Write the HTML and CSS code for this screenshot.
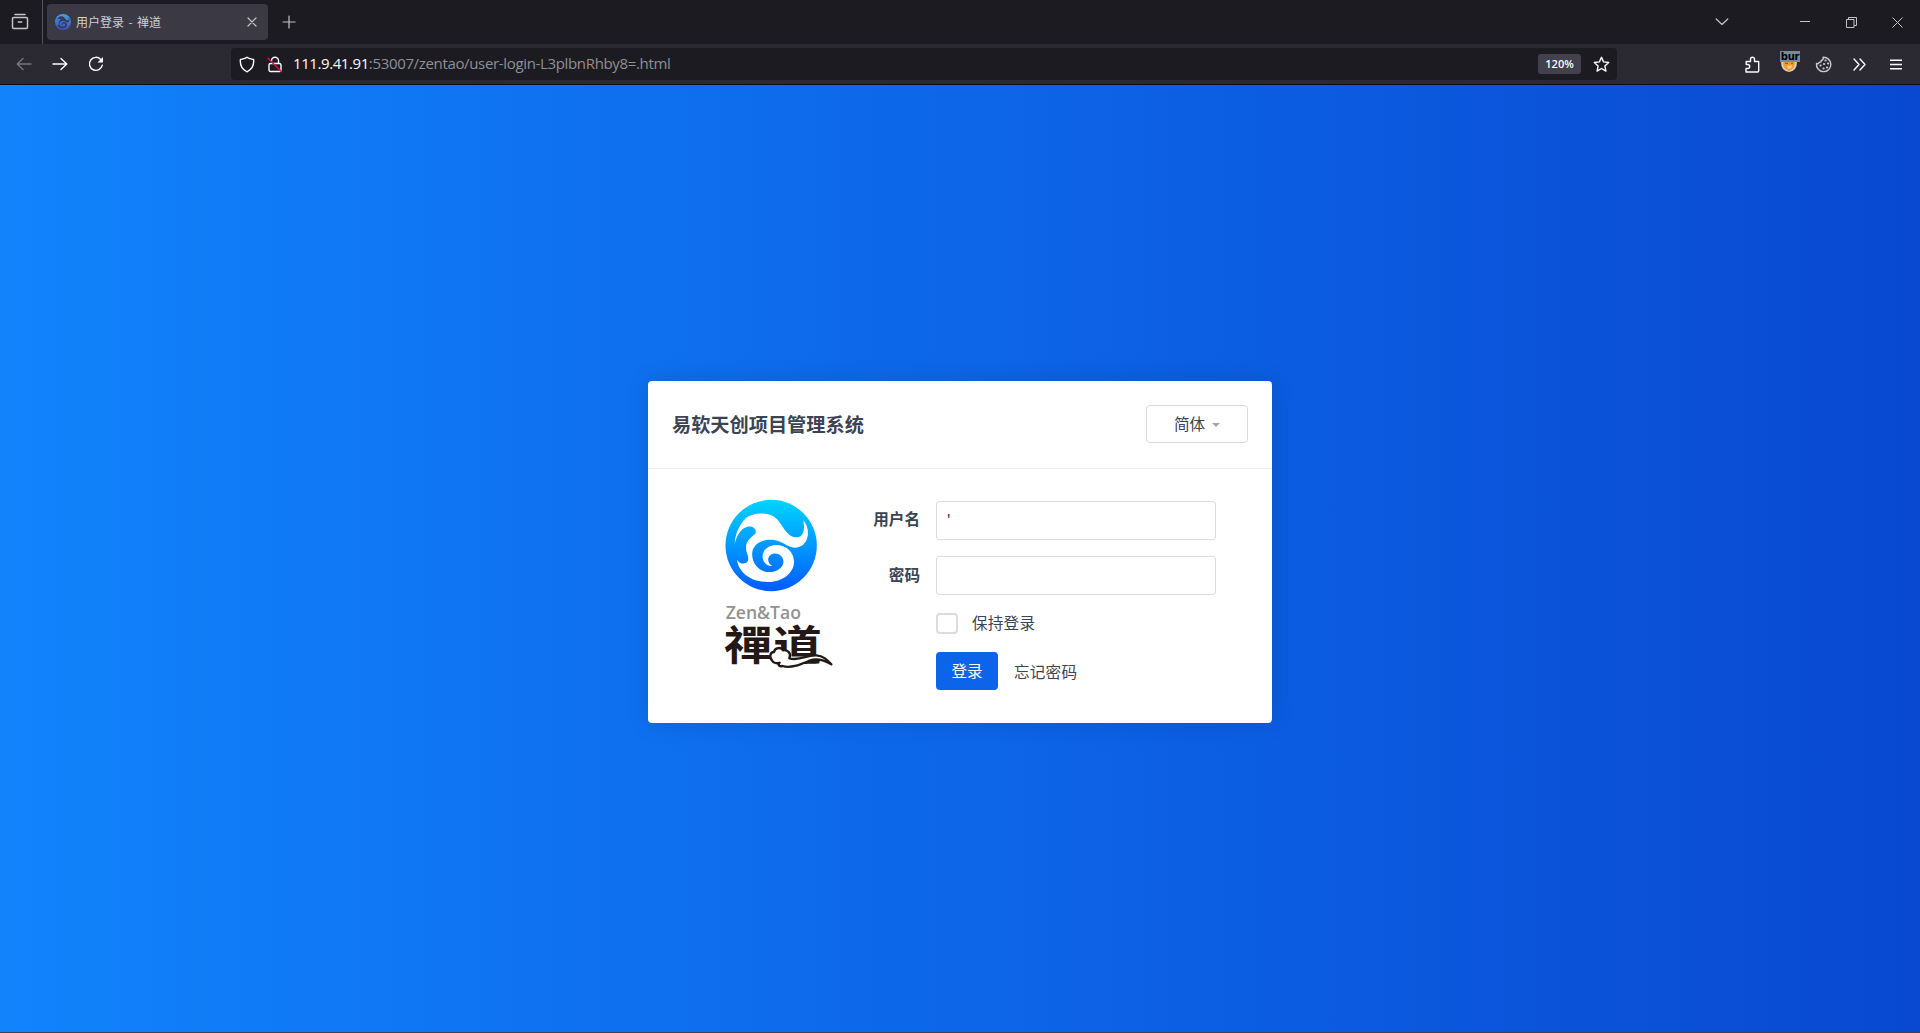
FILE: index.html
```html
<!DOCTYPE html>
<html lang="zh-CN">
<head>
<meta charset="utf-8">
<title>用户登录 - 禅道</title>
<link rel="stylesheet" href="styles.css">
</head>
<body>
<svg class="defs" aria-hidden="true">
  <defs>
    <linearGradient id="sea" x1="0" y1="0" x2="0" y2="1"><stop offset="0" stop-color="#00d5ff"/><stop offset="1" stop-color="#005bff"/></linearGradient>
    <linearGradient id="tabsea" x1="0" y1="0" x2="0" y2="1"><stop offset="0" stop-color="#4a9fdc"/><stop offset="1" stop-color="#3c4fc4"/></linearGradient>
    <path id="wave" d="M104 193C105 165 116 135 138 114C155 100 185 97 210 104C236 112 243 137 259 155C271 170 290 178 303 167C314 157 313 138 310 121C321 134 326 151 323 169C319 192 302 204 283 203C263 202 249 184 222 180C190 176 161 190 157 216C153 244 171 269 196 275C220 280 246 269 250 249C253 229 235 218 219 221C206 224 201 238 207 248C210 253 214 256 217 257C204 261 190 249 188 234C186 211 203 196 228 195C259 195 282 216 282 245C282 280 246 305 206 306C157 307 116 280 111 239C119 252 135 255 143 244C149 234 140 222 138 207C136 183 154 173 167 160C171 145 155 136 140 141C120 148 109 170 104 193Z"/>
  </defs>
</svg>
<header class="tabbar">
  <div class="view"><svg width="18" height="18" viewBox="0 0 18 18"><path d="M4 1.500h10M2.700 4.500h12.600a1.200 1.200 0 0 1 1.200 1.200v8.600a1.200 1.200 0 0 1-1.200 1.200H2.700a1.200 1.200 0 0 1-1.200-1.200V5.700a1.200 1.200 0 0 1 1.200-1.200zM7.300 9h3.400"/></svg></div>
  <div class="tab">
    <svg class="favicon" width="16" height="16" viewBox="77 60 273 273"><circle cx="213.500" cy="196.500" r="136.500" fill="url(#tabsea)"/><use href="#wave" fill="#343b62"/></svg>
    <span class="tab-title">用户登录 - 禅道</span>
    <svg width="10" height="10" viewBox="0 0 10 10"><path d="M1 1l8 8M9 1l-8 8"/></svg>
  </div>
  <svg class="plus" width="14" height="14" viewBox="0 0 14 14"><path d="M7 1v12M1 7h12"/></svg>
  <div class="window">
    <svg width="14" height="8" viewBox="0 0 14 8"><path d="M1.200 1L7 6.500L12.800 1"/></svg>
    <svg width="10" height="10" viewBox="0 0 10 10"><path d="M0 4.500h10"/></svg>
    <svg width="11" height="11" viewBox="0 0 11 11"><path d="M.5 2.500h7.500v8H.5zM2.500 2.500v-2h8v8H8"/></svg>
    <svg width="11" height="11" viewBox="0 0 11 11"><path d="M.5.5l10 10M10.500.5l-10 10"/></svg>
  </div>
</header>
<nav class="toolbar">
  <div class="history">
    <svg class="dim" width="16" height="14" viewBox="0 0 16 14"><path d="M15 7H1.500M7 1.500L1.200 7L7 12.500"/></svg>
    <svg width="16" height="14" viewBox="0 0 16 14"><path d="M1 7h13.500M9 1.500l5.800 5.500L9 12.500"/></svg>
    <svg width="16" height="16" viewBox="0 0 16 16"><path d="M14.300 9.200A6.500 6.500 0 1 1 12.800 3.500L14 5"/><path class="solid" d="M15 1v5.500H9.500z"/></svg>
  </div>
  <div class="address">
    <svg width="16" height="17" viewBox="0 0 16 17"><path d="M8 1.300C6.500 2.600 3.800 3 1.400 3.500C.8 9.500 3 13.500 8 15.800C13 13.500 15.200 9.500 14.600 3.500C12.200 3 9.500 2.600 8 1.300z"/></svg>
    <svg width="16" height="17" viewBox="0 0 16 17"><path d="M4.500 7.500h8a1.500 1.500 0 0 1 1.500 1.500v5a1.500 1.500 0 0 1-1.500 1.500h-9A1.500 1.500 0 0 1 2 14V9q0-1.500 1.500-1.500M4.500 5v-.3a3.500 3.500 0 0 1 7 0v2.800"/><path class="slash" d="M1 2.200l13.500 13.500"/></svg>
    <span class="url"><b>111.9.41.91</b><span>:53007/zentao/user-login-L3plbnRhby8=.html</span></span>
    <span class="zoom">120%</span>
    <svg width="17" height="17" viewBox="0 0 17 17"><path d="M8.500 1.300l2.100 4.600 5.100.6-3.800 3.500 1 5.100-4.400-2.600-4.400 2.600 1-5.100L1.300 6.500l5.100-.6z"/></svg>
  </div>
  <div class="extensions">
    <svg width="15" height="17" viewBox="0 0 15 17"><path d="M1 16h11.500q1.200 0 1.200-1.200V5.500H9.500V3.200a2 2 0 0 0-4 0v2.300H1.200V8.500h1.500a2 2 0 0 1 0 4H1z"/></svg>
    <span class="fox"><svg width="16" height="11" viewBox="0 0 16 13" preserveAspectRatio="none"><path d="M0 1h16q0 11-8 12Q0 12 0 1z"/><path d="M2 1h12q0 5-2 8l-4 3-4-3Q2 6 2 1z"/><path d="M4 2h3v1.500H4zM10 2h2v1.500h-2z"/><path d="M6 6l5-1-1 4H7z"/></svg><span class="badge">bur</span></span>
    <svg class="cookie" width="17" height="17" viewBox="0 0 17 17"><path d="M8 1.300a7.200 7.200 0 1 1-6.500 6.200q2 .8 2.800-1.200q2.200.4 2-1.800Q9 3.500 8 1.300z"/><path class="dots" d="M10.500 4.500h.1M13 7.500h.1M9 8h.1M5.500 9.500h.1M8.500 12.500h.1M12 11.500h.1"/></svg>
    <svg width="13" height="13" viewBox="0 0 13 13"><path d="M1 1l5 5.500-5 5.500M7 1l5 5.500-5 5.500"/></svg>
    <svg width="12" height="11" viewBox="0 0 12 11"><path d="M0 1.200h12M0 5.500h12M0 9.800h12"/></svg>
  </div>
</nav>
<main>
  <section class="card">
    <header class="card-head">
      <h1>易软天创项目管理系统</h1>
      <button class="language" type="button">简体<i></i></button>
    </header>
    <div class="card-body">
      <svg class="logo" width="108" height="170" viewBox="72 57 324 510">
        <circle cx="213.500" cy="196.500" r="137" fill="url(#sea)"/>
        <use href="#wave" fill="#fff"/>
        <text class="latin" x="77" y="416" textLength="226" lengthAdjust="spacingAndGlyphs">Zen&amp;Tao</text>
        <text class="seal" x="72" y="540" textLength="294" lengthAdjust="spacingAndGlyphs">禪道</text>
        <path class="cloud" d="M216 541C207 532 210 516 222 516C224 502 244 500 249 511C264 508 275 522 268 535C301 544 319 524 349 526C370 527 382 540 394 553C370 539 349 534 329 542C302 553 274 566 247 558C236 561 233 553 239 548C232 552 219 549 216 541Z"/>
      </svg>
      <form>
        <label for="account">用户名</label>
        <input id="account" type="text" value="'">
        <label class="lower" for="password">密码</label>
        <input id="password" type="password">
        <div class="keep"><span class="box"></span>保持登录</div>
        <div class="actions"><button class="login" type="button">登录</button><a>忘记密码</a></div>
      </form>
    </div>
  </section>
</main>
</body>
</html>
```
FILE: styles.css
```css
* { box-sizing: border-box; }
body {
  margin: 0;
  height: 1033px;
  display: flex;
  flex-direction: column;
  overflow: hidden;
  font-family: "Open Sans", "Noto Sans CJK SC", sans-serif;
  color: #3c4353;
}
svg { display: block; flex: none; }
.defs { position: absolute; width: 0; height: 0; }

.tabbar svg path, .toolbar svg path { fill: none; stroke: #fbfbfe; stroke-width: 1.4; stroke-linejoin: round; stroke-linecap: round; }
.tabbar { height: 44px; background: #1c1b22; display: flex; align-items: center; }
.tabbar svg path { stroke: #c4c4c8; stroke-width: 1.2; }
.view { width: 43px; height: 44px; padding: 13px 0 0 11px; border-right: 1px solid #55545c; }
.view svg path { stroke-width: 1.5; }
.tab { width: 221px; height: 36px; margin-left: 4px; padding: 0 11px 0 8px; display: flex; align-items: center; background: #3a3944; border-radius: 4px; color: #d0d0d5; font: 12px/18px "Noto Sans CJK SC", sans-serif; }
.tab .favicon { margin-right: 5px; }
.tab-title { flex: 1; word-spacing: 1.7px; }
.plus { margin-left: 14px; }
.window { margin-left: auto; padding-right: 17px; display: flex; align-items: center; }
.window svg:nth-child(2) { margin-left: 71px; }
.window svg:nth-child(3) { margin-left: 36px; }
.window svg:nth-child(4) { margin-left: 35px; }
.window svg:nth-child(n+2) path { stroke-width: 1; stroke-linecap: butt; stroke-linejoin: miter; }

.toolbar { height: 41px; flex: none; background: #2b2a33; border-bottom: 1px solid #0d0d12; display: flex; align-items: center; }
.history { width: 231px; padding-left: 16px; display: flex; align-items: center; gap: 20px; }
.toolbar .dim path { stroke: #77767e; }
.toolbar .solid { fill: #fbfbfe; stroke: none; }
.address { width: 1386px; height: 32px; padding: 0 7px 0 8px; display: flex; align-items: center; background: #1c1b22; border-radius: 4px; }
.address svg:nth-child(2) { margin-left: 12px; }
.toolbar .slash { stroke: #e8103c; }
.url { flex: 1; margin: -2px 0 0 10px; font-size: 15px; line-height: 20px; letter-spacing: -0.34px; color: #8f8f94; white-space: nowrap; }
.url b { color: #fbfbfe; font-weight: 400; letter-spacing: -0.42px; }
.zoom { width: 43px; height: 20px; margin-right: 12px; text-align: center; background: #42414d; border-radius: 3px; color: #fbfbfe; font-size: 11px; line-height: 20px; font-weight: 600; }
.extensions { margin-left: auto; padding-right: 18px; display: flex; align-items: center; }
.fox { position: relative; width: 20px; height: 22px; margin-left: 20px; padding: 8px 0 0 1px; }
.toolbar .fox path { stroke: none; }
.toolbar .fox path:nth-child(1) { fill: #d5cfc6; }
.toolbar .fox path:nth-child(2) { fill: #f29b31; }
.toolbar .fox path:nth-child(3) { fill: #a65b1b; }
.toolbar .fox path:nth-child(4) { fill: #ffd18a; }
.badge { position: absolute; left: 0; top: -2px; width: 20px; height: 11px; background: #78899a; color: #000; font: bold 10px/11px "DejaVu Sans", sans-serif; letter-spacing: -0.3px; text-align: center; }
.cookie { margin-left: 15px; }
.toolbar .cookie path { stroke: #c9c9cd; }
.toolbar .cookie .dots { stroke-width: 2.2; }
.extensions svg:nth-child(4) { margin-left: 21px; }
.extensions svg:nth-child(5) { margin-left: 24px; }

main { flex: 1; padding-top: 296px; background: linear-gradient(90deg, #1183fb, #0d66e8 50%, #0949d1); border-bottom: 1px solid #3b4252; }
.card { width: 624px; height: 342px; margin: 0 auto; background: #fff; border-radius: 4px; box-shadow: 0 0 24px rgba(0, 0, 0, .12); }
.card-head { height: 88px; padding: 0 24px; display: flex; justify-content: space-between; border-bottom: 1px solid #ededef; }
h1 { margin: 28px 0 0; font-size: 19.2px; line-height: 30px; font-weight: 700; font-family: "Noto Sans CJK SC", sans-serif; }
button { font-family: inherit; }
.language { width: 102px; height: 38px; margin-top: 24px; padding: 0 0 1px; display: flex; align-items: center; justify-content: center; gap: 7px; border: 1px solid #d5d9e2; border-radius: 4px; background: #fff; color: #3c4353; font-size: 15.6px; }
.language i { margin-top: 2px; border: 4px solid transparent; border-top-color: #9ea3b0; border-bottom: 0; }
.card-body { display: flex; padding: 30px 56px 0 76px; }
.logo { width: 108px; height: 170px; overflow: visible; }
.latin { font: 600 52px "Open Sans", sans-serif; fill: #929292; }
.seal { font: 700 122px "Noto Sans CJK TC", sans-serif; fill: #231815; }
.cloud { fill: #fff; stroke: #231815; stroke-width: 7; stroke-linejoin: round; }
form { width: 384px; padding-top: 2px; display: grid; grid-template-columns: 88px 280px; column-gap: 16px; grid-template-rows: 39px 39px 21px 38px; row-gap: 16px; font-size: 15.6px; }
label { text-align: right; line-height: 36px; font-weight: 700; }
.lower { line-height: 38px; }
input { width: 280px; height: 39px; border: 1px solid #dcdcdc; border-radius: 3px; outline: 0; padding: 0 10px 2px; color: #222; font: 15.6px "Open Sans", sans-serif; }
.keep, .actions { grid-column: 2; display: flex; align-items: center; letter-spacing: 0.2px; }
.keep { margin-top: 2px; height: 21px; line-height: 19px; }
.actions { margin-top: 4px; height: 38px; }
.box { width: 22px; height: 21px; margin-right: 14px; border: 2px solid #dcdcdc; border-radius: 4px; }
.login { width: 62px; height: 38px; margin-right: 16px; padding: 0 0 1px; border: 0; border-radius: 4px; background: #0c64eb; color: #fff; font-size: 15.6px; }
```
